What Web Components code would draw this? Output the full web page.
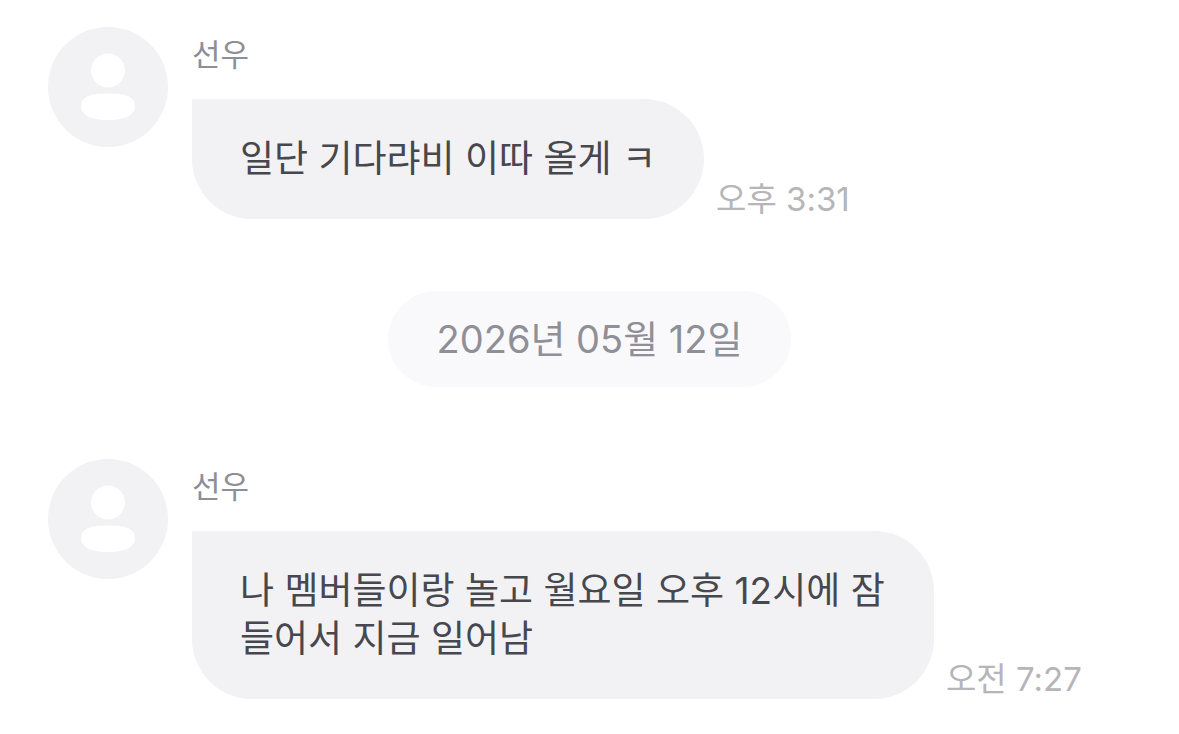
<!DOCTYPE html>
<html lang="ko">
<head>
<meta charset="utf-8">
<meta name="viewport" content="width=device-width, initial-scale=1">
<title>선우</title>
<style>
body { margin: 0; background: #fff; font-family: Inter, "Noto Sans CJK KR", sans-serif; }
</style>
</head>
<body>
<chat-thread>
  <chat-message><span slot="name">선우</span>일단 기다랴비 이따 올게 ㅋ<time slot="time">오후 3:31</time></chat-message>
  <date-pill>2026년 05월 12일</date-pill>
  <chat-message><span slot="name">선우</span>나 멤버들이랑 놀고 월요일 오후 12시에 잠들어서 지금 일어남<time slot="time">오전 7:27</time></chat-message>
</chat-thread>
<script>
const define = (name, html) => customElements.define(name, class extends HTMLElement {
  constructor() {
    super();
    const t = document.createElement('template');
    t.innerHTML = html;
    this.attachShadow({ mode: 'open' }).append(t.content.cloneNode(true));
  }
});

define('chat-thread', `
<style>
  :host { display: flex; flex-direction: column; gap: 72px; padding: 27px 48px 36px; }
</style>
<slot></slot>`);

define('user-avatar', `
<style>
  :host { display: block; width: 120px; height: 120px; flex: none; }
  svg { display: block; width: 100%; height: 100%; }
</style>
<svg viewBox="0 0 120 120" aria-hidden="true">
  <circle cx="60" cy="60" r="60" fill="#f2f2f4"/>
  <circle cx="60" cy="43.500" r="17" fill="#fff"/>
  <path d="M60 66.500C77 66.500 87 69 87 79.500C87 88 77 93 60 93S33 88 33 79.500C33 69 43 66.500 60 66.500Z" fill="#fff"/>
</svg>`);

define('chat-message', `
<style>
  :host { display: flex; align-items: flex-start; gap: 24px; }
  .body { flex: 1; min-width: 0; }
  .name { line-height: 56px; margin-bottom: 16px; font-size: 31px; color: #8e8e96; }
  .row { display: flex; align-items: flex-end; gap: 12px; }
  .bubble { box-sizing: border-box; max-width: 742px; padding: 36px 48px; border-radius: 0 60px 60px 60px;
    background: #f2f2f4; color: #47474e; font-size: 37px; line-height: 48px; }
  .time { flex: none; font-size: 33px; line-height: 40px; color: #b5b5ba; }
</style>
<user-avatar></user-avatar>
<div class="body">
  <div class="name"><slot name="name"></slot></div>
  <div class="row">
    <div class="bubble"><slot></slot></div>
    <div class="time"><slot name="time"></slot></div>
  </div>
</div>`);

define('date-pill', `
<style>
  :host { display: block; align-self: center; padding: 24px 49px; border-radius: 48px; background: #f9f9fb;
    color: #8f8f97; font-size: 38px; line-height: 48px; }
</style>
<slot></slot>`);
</script>
</body>
</html>
